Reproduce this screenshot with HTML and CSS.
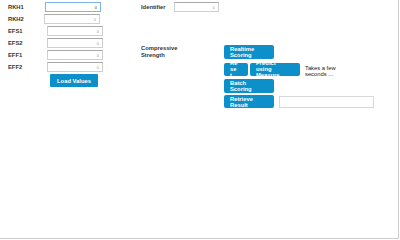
FILE: index.html
```html
<!DOCTYPE html>
<html lang="en">
<head>
    <meta charset="UTF-8">
    <title>Compressive Strength</title>
    <link rel="stylesheet" href="styles.css">
</head>
<body>
    <div class="page">
        <div class="left-col">
            <div class="field"><label>RKH1</label><input class="num focused" value="0"></div>
            <div class="field shift-l"><label>RKH2</label><input class="num" value="0"></div>
            <div class="field shift-r"><label>EFS1</label><input class="num" value="0"></div>
            <div class="field shift-r"><label>EFS2</label><input class="num" value="0"></div>
            <div class="field shift-r"><label>EFF1</label><input class="num" value="0"></div>
            <div class="field shift-r"><label>EFF2</label><input class="num" value="0"></div>
            <button class="btn load-btn">Load Values</button>
        </div>

        <div class="right-col">
            <div class="field ident"><label>Identifier</label><input class="num small" value="0"></div>

            <div class="scoring">
                <div class="score-label">Compressive<br>Strength</div>
                <div class="actions">
                    <button class="btn wide">Realtime<br>Scoring</button>
                    <div class="action-row">
                        <button class="btn narrow"><span>Re<br>se<br>t</span></button>
                        <button class="btn wide tight"><span>Predict<br>using<br>Measure</span></button>
                        <span class="note">Takes a few<br>seconds ...</span>
                    </div>
                    <button class="btn wide">Batch<br>Scoring</button>
                    <div class="action-row">
                        <button class="btn wide">Retrieve<br>Result</button>
                        <input class="result">
                    </div>
                </div>
            </div>
        </div>
    </div>
</body>
</html>
```

FILE: styles.css
```css
body {
    margin: 0;
    background: #fff;
    font-family: "Liberation Sans", Arial, sans-serif;
    color: #222;
}

.page {
    display: flex;
    width: 398px;
    height: 238px;
    border-right: 1px solid #ccc;
    border-bottom: 1px solid #ccc;
    box-sizing: content-box;
}

.left-col {
    width: 141px;
    padding: 2px 0 0 8px;
    box-sizing: border-box;
    display: flex;
    flex-direction: column;
}

.field {
    display: flex;
    align-items: center;
    height: 10px;
    margin-bottom: 2px;
}

.field label {
    width: 37px;
    font-size: 5.8px;
    font-weight: bold;
    color: #333;
}

.shift-l label { width: 36px; }
.shift-r label { width: 39px; }

.num {
    width: 56px;
    height: 10px;
    box-sizing: border-box;
    border: 1px solid #cfcfcf;
    border-top-color: #a9a9a9;
    padding: 0 3px;
    font-size: 4px;
    text-align: right;
    color: #999;
    font-family: inherit;
    background: #fff;
}

.num.focused {
    border: 1px solid #7fb4e8;
    color: #333;
}

.btn {
    background: #0d90c9;
    color: #fff;
    border: none;
    border-radius: 2px;
    font-family: inherit;
    font-weight: bold;
    font-size: 5.8px;
    line-height: 6px;
    text-align: left;
    padding: 1px 6px;
    box-sizing: border-box;
    overflow: hidden;
}

.load-btn {
    margin: 0 0 0 42px;
    width: 48px;
    height: 13px;
    text-align: center;
    padding: 0;
    border-radius: 1px;
}

.right-col {
    display: flex;
    flex-direction: column;
    padding-top: 2px;
}

.ident label {
    width: 33px;
}

.num.small {
    width: 45px;
}

.scoring {
    display: flex;
    margin-top: 31px;
}

.score-label {
    width: 83px;
    font-size: 5.8px;
    font-weight: bold;
    line-height: 7px;
    color: #333;
}

.actions {
    display: flex;
    flex-direction: column;
    gap: 2px;
}

.wide {
    width: 50px;
    height: 14px;
}

.action-row {
    display: flex;
    align-items: center;
    gap: 2px;
}

.narrow {
    width: 24px;
    height: 13px;
    padding: 0 0 0 6px;
}

.action-row .wide {
    height: 13px;
}

.narrow,
.tight {
    display: flex;
    flex-direction: column;
    justify-content: center;
    padding-top: 0;
    padding-bottom: 0;
}

.note {
    margin-left: 3px;
    font-size: 5.8px;
    line-height: 6px;
    padding-top: 4px;
    color: #222;
}

.result {
    margin-left: 3px;
    width: 95px;
    height: 12px;
    box-sizing: border-box;
    border: 1px solid #d8d8d8;
}
```
